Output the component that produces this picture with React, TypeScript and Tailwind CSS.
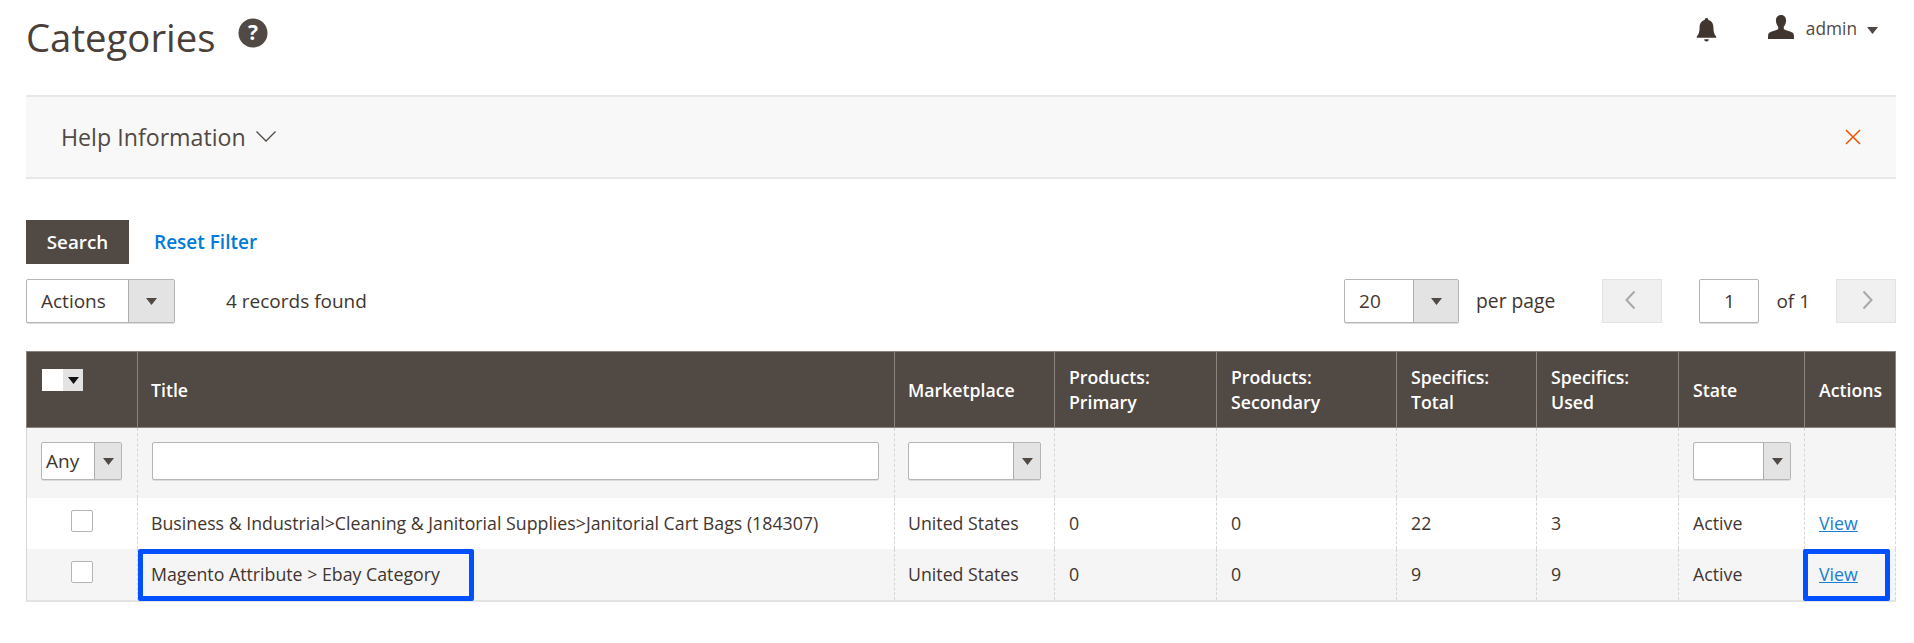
import React from "react";

function Caret({ className = "" }: { className?: string }) {
  return (
    <svg width="11" height="7" viewBox="0 0 11 7" className={className}>
      <path d="M0 0h11L5.500 7z" fill="#514943" />
    </svg>
  );
}

function Select({ w, arrow, label, small }: { w: string; arrow: string; label?: string; small?: boolean }) {
  return (
    <div className={`flex ${w} ${small ? "h-[38px]" : "h-[44px]"} bg-white border border-[#b5b5b5] rounded-[2px] shadow-[0_1px_0_#ddd]`}>
      <div className={`flex-1 flex items-center text-[19px] text-[#41362f] ${small ? "pl-[4px]" : "pl-[14px]"}`}>{label}</div>
      <div className={`${arrow} border-l border-[#adadad] bg-[#e3e3e3] flex items-center justify-center`}>
        <Caret />
      </div>
    </div>
  );
}

const heads: React.ReactNode[] = [
  "Title",
  "Marketplace",
  <>Products:<br />Primary</>,
  <>Products:<br />Secondary</>,
  <>Specifics:<br />Total</>,
  <>Specifics:<br />Used</>,
  "State",
  "Actions",
];

const rows = [
  { title: "Business & Industrial>Cleaning & Janitorial Supplies>Janitorial Cart Bags (184307)", a: "0", b: "0", c: "22", d: "3", bg: "bg-white", h: "h-[51px]" },
  { title: "Magento Attribute > Ebay Category", a: "0", b: "0", c: "9", d: "9", bg: "bg-[#f5f5f5]", h: "h-[52px]" },
];

const tdBorder = "border-l border-dashed border-[#d6d6d6]";

export default function App() {
  return (
    <div className="w-[1914px] h-[643px] bg-white overflow-hidden text-[#41362f] text-[17.75px] font-['Open_Sans',sans-serif]">
      <div className="pl-[26px] pr-[18px]">
        <div className="flex justify-between h-[95px]">
          <div className="flex items-start pt-[12px]">
            <h1 className="text-[38.3px] leading-[50px] font-normal text-[#4a4039]">Categories</h1>
            <svg width="30" height="30" viewBox="0 0 30 30" className="ml-[23px] mt-[6px]">
              <circle cx="15" cy="15" r="14.5" fill="#514943" />
              <text x="15" y="22" textAnchor="middle" fill="#fff" fontSize="21" fontWeight="700" fontFamily="Open Sans">?</text>
            </svg>
          </div>
          <div className="flex items-start pt-[18px]">
            <svg width="21" height="24" viewBox="0 0 22 26" className="mr-[51px]">
              <path fill="#41362f" d="M11 0a2 2 0 0 1 2 2.200c4 1 5.500 4.400 5.500 8.300 0 4 .8 7 3 9.500v1.500H.5V20c2.200-2.500 3-5.500 3-9.500 0-3.900 1.500-7.300 5.500-8.300A2 2 0 0 1 11 0zM8.500 23h5a2.500 2.500 0 0 1-5 0z" />
            </svg>
            <svg width="26" height="24" viewBox="0 0 28 28" preserveAspectRatio="none" className="mr-[12px] -mt-[3px]">
              <path fill="#41362f" d="M14 0c3.800 0 5.500 3 5.500 6.500 0 3-1.200 5.500-2.500 7.200v2.300c0 1.500 8 3 10 5 .8.800 1 3 1 7H0c0-4 .2-6.200 1-7 2-2 10-3.500 10-5v-2.300C9.700 12 8.500 9.500 8.500 6.500 8.500 3 10.200 0 14 0z" />
            </svg>
            <span className="text-[17.300px] leading-[24px] mt-[-1px] text-[#514943]">admin</span>
            <Caret className="ml-[10px] mt-[9px]" />
            <span className="w-[18px]" />
          </div>
        </div>

        <div className="flex items-center justify-between h-[84px] bg-[#f8f8f8] border-y-2 border-[#e8e8e8] pl-[35px] pr-[34px]">
          <div className="flex items-center">
            <span className="text-[23.200px] text-[#514943]">Help Information</span>
            <svg width="20" height="11" viewBox="0 0 20 11" className="ml-[10px]">
              <path d="M0.500 .5L10 10L19.500 .5" stroke="#514943" strokeWidth="1.300" fill="none" />
            </svg>
          </div>
          <svg width="16" height="16" viewBox="0 0 16 16" className="mr-[1px]">
            <path d="M1 1L15 15M15 1L1 15" stroke="#eb5202" strokeWidth="1.500" fill="none" />
          </svg>
        </div>

        <div className="flex items-center mt-[41px] h-[44px]">
          <button className="w-[103px] h-[44px] bg-[#514943] text-white font-semibold text-[18.800px]">Search</button>
          <a className="ml-[25px] text-[#007bdb] font-semibold text-[19px]">Reset Filter</a>
        </div>

        <div className="flex items-center justify-between mt-[15px] h-[44px] text-[19px]">
          <div className="flex items-center">
            <Select w="w-[149px]" arrow="w-[46px]" label="Actions" />
            <span className="ml-[51px]">4 records found</span>
          </div>
          <div className="flex items-center">
            <Select w="w-[115px]" arrow="w-[45px]" label="20" />
            <span className="ml-[17px] text-[19.300px]">per page</span>
            <div className="ml-[47px] w-[60px] h-[44px] bg-[#f0f0f0] border border-[#e3e3e3] flex items-center justify-center">
              <svg width="12" height="20" viewBox="0 0 12 20" className="-ml-[4px] -mt-[2px]"><path d="M10.500 1.500L2.500 10l8 8.500" stroke="#a8a8a8" strokeWidth="2" fill="none" /></svg>
            </div>
            <div className="ml-[37px] w-[60px] h-[44px] bg-white border border-[#b5b5b5] rounded-[2px] shadow-[0_1px_0_#ddd] flex items-center justify-center">1</div>
            <span className="ml-[17px]">of 1</span>
            <div className="ml-[26px] w-[60px] h-[44px] bg-[#f0f0f0] border border-[#e3e3e3] flex items-center justify-center">
              <svg width="12" height="20" viewBox="0 0 12 20" className="ml-[3px] -mt-[2px]"><path d="M1.500 1.500l8 8.500-8 8.500" stroke="#a8a8a8" strokeWidth="2" fill="none" /></svg>
            </div>
          </div>
        </div>

        <div className="mt-[28px] relative w-[1870px]">
          <table className="w-full table-fixed border-collapse">
            <colgroup>
              <col className="w-[111px]" />
              <col className="w-[757px]" />
              <col className="w-[160px]" />
              <col className="w-[162px]" />
              <col className="w-[180px]" />
              <col className="w-[140px]" />
              <col className="w-[142px]" />
              <col className="w-[126px]" />
              <col />
            </colgroup>
            <thead>
              <tr className="h-[76px] bg-[#514943] text-white text-[17.700px] leading-[25px]">
                <th className="p-0 align-top border border-[#8a837e] font-normal">
                  <div className="ml-[15px] mt-[17px] flex w-[41px] h-[22px]">
                    <div className="w-[21px] bg-white" />
                    <div className="w-[20px] bg-[#e3e3e3] flex items-center justify-center"><svg width="11" height="7" viewBox="0 0 11 7"><path d="M0 0h11L5.500 7z" fill="#111" /></svg></div>
                  </div>
                </th>
                {heads.map((h, i) => (
                  <th key={i} className={`${i < 2 ? "px-[13px]" : "px-[14px]"} pt-[1px] text-left align-middle font-semibold border border-[#8a837e]`}>{h}</th>
                ))}
              </tr>
            </thead>
            <tbody>
              <tr className="h-[70px] bg-[#f5f5f5]">
                <td className="px-[14px] pt-[14px] align-top border-l border-[#d6d6d6]">
                  <Select w="w-[81px]" arrow="w-[27px]" label="Any" small />
                </td>
                <td className={`px-[14px] pt-[14px] align-top ${tdBorder}`}>
                  <div className="w-[727px] h-[38px] bg-white border border-[#b5b5b5] rounded-[2px] shadow-[0_1px_0_#ddd]" />
                </td>
                <td className={`px-[13px] pt-[14px] align-top ${tdBorder}`}>
                  <Select w="w-[133px]" arrow="w-[27px]" small />
                </td>
                <td className={tdBorder} />
                <td className={tdBorder} />
                <td className={tdBorder} />
                <td className={tdBorder} />
                <td className={`px-[14px] pt-[14px] align-top ${tdBorder}`}>
                  <Select w="w-[98px]" arrow="w-[27px]" small />
                </td>
                <td className={`${tdBorder} border-r`} />
              </tr>
              {rows.map((r, i) => (
                <tr key={i} className={`${r.h} ${r.bg} ${i === 1 ? "border-b-2 border-[#e3e3e3]" : ""}`}>
                  <td className="border-l border-[#d6d6d6]">
                    <div className="mx-auto w-[22px] h-[22px] bg-white border border-[#b5b5b5] rounded-[2px] relative -top-[2px]" />
                  </td>
                  <td className={`px-[13px] ${tdBorder}`}>{r.title}</td>
                  <td className={`px-[13px] ${tdBorder}`}>United States</td>
                  <td className={`px-[14px] ${tdBorder}`}>{r.a}</td>
                  <td className={`px-[14px] ${tdBorder}`}>{r.b}</td>
                  <td className={`px-[14px] ${tdBorder}`}>{r.c}</td>
                  <td className={`px-[14px] ${tdBorder}`}>{r.d}</td>
                  <td className={`px-[14px] ${tdBorder}`}>Active</td>
                  <td className={`px-[14px] ${tdBorder} border-r border-[#d6d6d6]`}><a className="text-[#1a7fd4] underline">View</a></td>
                </tr>
              ))}
            </tbody>
          </table>
          <div className="absolute left-[112px] top-[198px] w-[336px] h-[52px] border-[5px] border-[#0050ff] rounded-[2px]" />
          <div className="absolute left-[1777px] top-[198px] w-[87px] h-[52px] border-[5px] border-[#0050ff] rounded-[2px]" />
        </div>
      </div>
    </div>
  );
}
